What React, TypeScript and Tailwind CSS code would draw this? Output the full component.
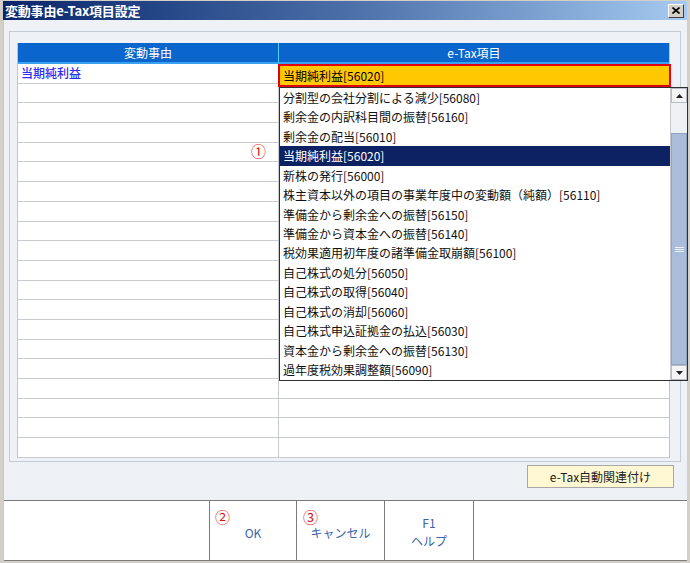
import React from "react";

const jp = { fontFamily: '"Noto Sans CJK JP", "Noto Sans", sans-serif' };

const items = [
  "分割型の会社分割による減少[56080]",
  "剰余金の内訳科目間の振替[56160]",
  "剰余金の配当[56010]",
  "当期純利益[56020]",
  "新株の発行[56000]",
  "株主資本以外の項目の事業年度中の変動額（純額）[56110]",
  "準備金から剰余金への振替[56150]",
  "準備金から資本金への振替[56140]",
  "税効果適用初年度の諸準備金取崩額[56100]",
  "自己株式の処分[56050]",
  "自己株式の取得[56040]",
  "自己株式の消却[56060]",
  "自己株式申込証拠金の払込[56030]",
  "資本金から剰余金への振替[56130]",
  "過年度税効果調整額[56090]",
];

const rows = Array.from({ length: 20 }, (_, i) => i);

function ScrollBar() {
  return (
    <div className="w-[17px] h-full flex flex-col bg-[#eef0f3] border-l border-[#c8ccd2]">
      <div className="h-[15px] flex items-center justify-center bg-[#f4f4f4] border border-[#b8bcc2]">
        <svg width="7" height="4" viewBox="0 0 7 4">
          <path d="M0 4 L3.5 0 L7 4 Z" fill="#222" />
        </svg>
      </div>
      <div className="h-[30px]" />
      <div className="flex-1 bg-[#a9bcd9] border border-[#8fa4c4] flex items-center justify-center">
        <div className="flex flex-col gap-[1px]">
          <div className="w-[9px] h-[1px] bg-[#eef2fa]" />
          <div className="w-[9px] h-[1px] bg-[#eef2fa]" />
          <div className="w-[9px] h-[1px] bg-[#eef2fa]" />
        </div>
      </div>
      <div className="h-[15px] flex items-center justify-center bg-[#f4f4f4] border border-[#b8bcc2]">
        <svg width="7" height="4" viewBox="0 0 7 4">
          <path d="M0 0 L3.5 4 L7 0 Z" fill="#222" />
        </svg>
      </div>
    </div>
  );
}

export default function App() {
  return (
    <div
      className="w-[690px] h-[563px] bg-[#d4d0c8] flex flex-col px-[3px] pt-[1px] pb-[2px] overflow-hidden"
      style={jp}
    >
      {/* title bar */}
      <div className="h-[19px] shrink-0 flex items-center justify-between pl-[2px] pr-[3px] bg-gradient-to-r from-[#0a246a] via-[#4a6fa8] to-[#a6caf0]">
        <span className="text-white font-bold text-[13px] leading-none tracking-[-0.2px]">
          変動事由e-Tax項目設定
        </span>
        <div className="w-[16px] h-[14px] bg-[#d4d0c8] border border-t-white border-l-white border-r-[#404040] border-b-[#404040] flex items-center justify-center">
          <svg width="8" height="7" viewBox="0 0 8 7">
            <path d="M0.5 0.5 L7.5 6.5 M7.5 0.5 L0.5 6.5" stroke="#000" strokeWidth="1.6" />
          </svg>
        </div>
      </div>

      {/* body */}
      <div className="flex-1 bg-[#eef2f7] flex flex-col border-l border-[#c8c8c8]">
        <div className="mt-[11px] ml-[5px] mr-[6px] h-[431px] border border-[#c4ccd6] pl-[7px] pr-[12px] pt-[11px]">
          <div className="relative w-[653px] border-l border-r border-[#c0c4ca] bg-white">
            {/* header */}
            <div className="flex h-[21px] text-white text-[12px]">
              <div className="w-[261px] bg-[#0a66cc] border-r border-[#4fd0ff] border-b-2 border-b-[#3aa0f0] flex items-center justify-center">
                変動事由
              </div>
              <div className="flex-1 bg-[#0a66cc] border-b-2 border-b-[#3aa0f0] flex items-center justify-center">
                e-Tax項目
              </div>
            </div>
            {/* rows */}
            {rows.map((i) => (
              <div key={i} className="flex h-[19.7px] border-b border-[#c8cbd0]">
                <div className="w-[261px] border-r border-[#c8cbd0] flex items-center pl-[3px] text-[12px] font-medium text-[#2c2cf4]">
                  {i === 0 ? "当期純利益" : ""}
                </div>
                <div className="flex-1" />
              </div>
            ))}

            {/* selected combo */}
            <div className="absolute left-[260px] top-[21px] w-[393px] h-[23px] bg-[#ffc800] border-2 border-[#e00010] flex items-center pl-[3px] text-[12px] text-black">
              当期純利益[56020]
            </div>

            {/* dropdown list */}
            <div className="absolute left-[261px] top-[44px] w-[409px] h-[294px] bg-white border border-[#303030] flex">
              <div className="flex-1 flex flex-col">
                {items.map((t, i) => (
                  <div
                    key={t}
                    className={
                      "h-[19.47px] flex items-center pl-[3px] text-[12px] whitespace-nowrap " +
                      (i === 3 ? "bg-[#0c2262] text-white" : "text-[#111]")
                    }
                  >
                    {t}
                  </div>
                ))}
              </div>
              <ScrollBar />
            </div>

            {/* marker 1 */}
            <span className="absolute left-[233px] top-[100px] text-[15px] leading-none text-[#e01010]">
              ①
            </span>
          </div>
        </div>

        {/* button row */}
        <div className="flex justify-end pr-[13px] mt-[3px]">
          <button className="w-[147px] h-[23px] bg-[#fff8d2] border border-[#a8a8a8] text-[12px] text-[#222] flex items-center justify-center">
            e-Tax自動関連付け
          </button>
        </div>

        <div className="flex-1" />

        {/* bottom function bar */}
        <div className="h-[61px] flex bg-white border-t border-b border-[#7a7a7a] text-[12px] text-[#3a64a8]">
          <div className="w-[206px] border-r border-[#7a7a7a]" />
          <div className="relative w-[87px] border-r border-[#7a7a7a] flex items-center justify-center pt-[4px]">
            <span className="absolute left-[5px] top-[8px] text-[15px] leading-none text-[#e01010]">②</span>
            OK
          </div>
          <div className="relative w-[88px] border-r border-[#7a7a7a] flex items-center justify-center pt-[4px]">
            <span className="absolute left-[6px] top-[8px] text-[15px] leading-none text-[#e01010]">③</span>
            キャンセル
          </div>
          <div className="w-[89px] border-r border-[#7a7a7a] flex flex-col items-center justify-center leading-[18px] pt-[2px]">
            <span>F1</span>
            <span>ヘルプ</span>
          </div>
          <div className="flex-1" />
        </div>
      </div>
    </div>
  );
}
